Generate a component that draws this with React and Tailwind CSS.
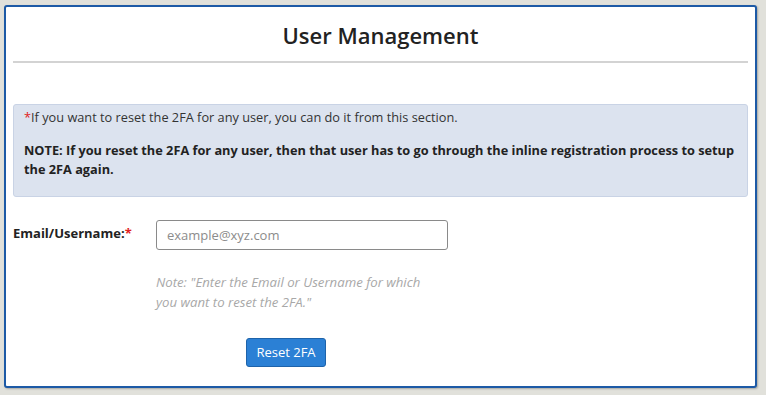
export default function App() {
  return (
    <div
      className="w-full h-[395px] bg-[#e1e1db] pt-[5px] pl-[4px]"
      style={{ fontFamily: '"Open Sans", "Noto Sans", sans-serif' }}
    >
      <div className="w-[753px] h-[383px] bg-white border-2 border-[#1d5aa6] rounded-[3px] shadow-[1px_1px_2px_rgba(0,0,0,0.25)] px-[7px]">
        {/* Heading */}
        <div className="h-[56px] flex items-center justify-center border-b-2 border-[#d3d3d3]">
          <h1 className="text-[22px] font-semibold text-[#222] leading-none mt-[1px]">User Management</h1>
        </div>

        {/* Info box */}
        <div className="mt-[41px] h-[93px] bg-[#dce3ef] border border-[#c9d3e5] rounded-[3px] px-[10px] pt-[3px] text-[12.75px] text-[#333]">
          <p className="leading-[19px]">
            <span className="text-[#e02020]">*</span>If you want to reset the 2FA for any user, you can do it from this section.
          </p>
          <p className="mt-[14px] font-bold leading-[19px] text-[#222]">
            NOTE: If you reset the 2FA for any user, then that user has to go through the inline registration process to setup the 2FA again.
          </p>
        </div>

        {/* Form */}
        <div className="mt-[23px] flex">
          <label className="w-[143px] pt-[4px] text-[13px] font-bold text-[#222]">
            Email/Username:<span className="text-[#e02020]">*</span>
          </label>
          <div className="flex flex-col">
            <input
              type="text"
              placeholder="example@xyz.com"
              className="w-[292px] h-[30px] border border-[#8a8a8a] rounded-[3px] px-[10px] text-[13px] placeholder-[#8c8c8c] outline-none"
            />
            <p className="mt-[22px] w-[280px] text-[13.2px] italic leading-[20px] text-[#a8a8a8]">
              Note: "Enter the Email or Username for which you want to reset the 2FA."
            </p>
            <div className="mt-[26px] pl-[90px]">
              <button className="w-[80px] h-[29px] bg-[#2b80d5] border border-[#1e63aa] rounded-[3px] text-white text-[13px]">
                Reset 2FA
              </button>
            </div>
          </div>
        </div>
      </div>
    </div>
  );
}
